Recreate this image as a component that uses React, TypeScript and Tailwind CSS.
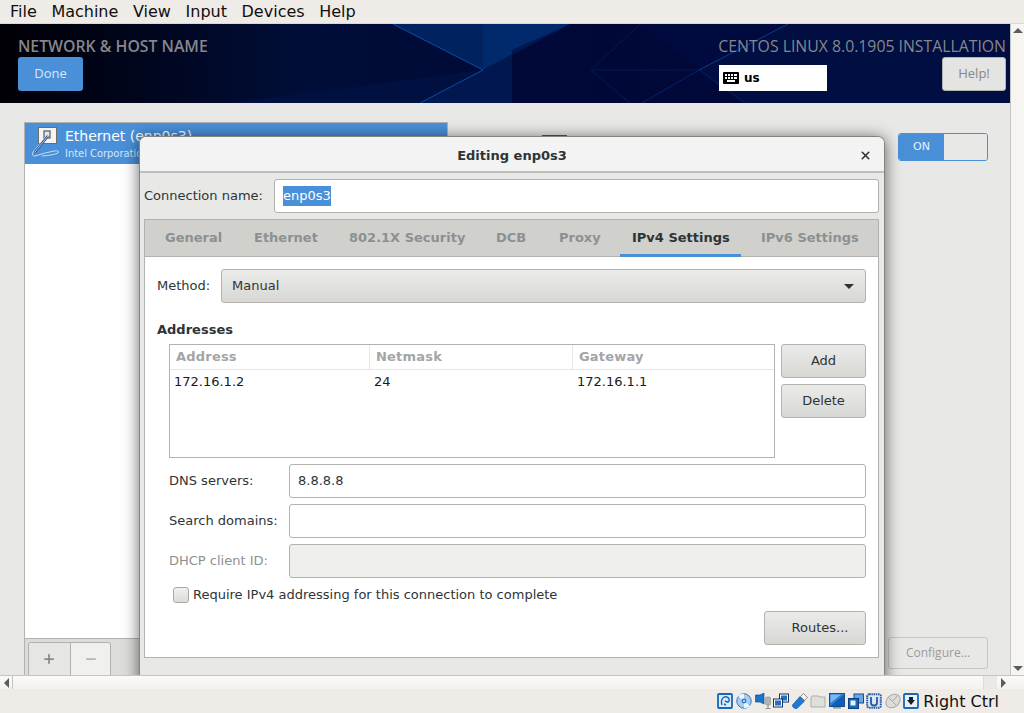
import { ReactNode } from "react";
import { Plus, Minus, X } from "lucide-react";

const deja = "font-['DejaVu_Sans',sans-serif]";
const over = "font-['Open_Sans','Liberation_Sans',sans-serif]";

const btn =
  "flex items-center rounded-[3px] border border-[#b2b2ae] bg-gradient-to-b from-[#ebebe9] to-[#d7d7d4] text-[13px] text-[#2e3436]";

function Field({ label, value, disabled }: { label: string; value?: string; disabled?: boolean }) {
  return (
    <div className="flex items-center">
      <div className={`w-[144px] pl-[24px] text-[13px] whitespace-nowrap ${disabled ? "text-[#8d9091]" : "text-[#2e3436]"}`}>
        {label}
      </div>
      <div
        className={`flex h-[34px] w-[577px] items-center rounded-[3px] border border-[#b2b2ae] px-[8px] text-[13px] text-[#2e3436] ${
          disabled ? "bg-[#efefee]" : "bg-white"
        }`}
      >
        {value}
      </div>
    </div>
  );
}

function KeyboardIcon() {
  return (
    <svg width="16" height="12" viewBox="0 0 16 12">
      <rect width="16" height="12" rx="1" fill="#000" />
      <g fill="#fff">
        <rect x="2" y="2" width="2" height="2" />
        <rect x="5" y="2" width="2" height="2" />
        <rect x="8" y="2" width="2" height="2" />
        <rect x="11" y="2" width="3" height="2" />
        <rect x="2" y="5" width="2" height="2" />
        <rect x="5" y="5" width="2" height="2" />
        <rect x="8" y="5" width="2" height="2" />
        <rect x="11" y="5" width="3" height="2" />
        <rect x="4" y="8" width="8" height="2" />
      </g>
    </svg>
  );
}

function EthernetIcon() {
  return (
    <svg width="34" height="36" viewBox="0 0 34 36" className="shrink-0">
      <rect x="8.5" y="1.5" width="18" height="16" fill="#f4f4f2" stroke="#6d6d6a" />
      <rect x="14" y="5" width="6" height="7" fill="#e6e6e4" stroke="#55595c" strokeWidth="1.2" />
      <path d="M17 9 L3 26 Q1 30 5 30 Q14 27 24 25 Q30 24 28 27 Q24 29 12 30" fill="none" stroke="#c9daf0" strokeWidth="1" />
      <path d="M18 10 L5 26" fill="none" stroke="#27528f" strokeWidth="2.4" />
      <path d="M18 10 L5 26" fill="none" stroke="#a9c6ec" strokeWidth="1" />
    </svg>
  );
}

function HeaderArt() {
  return (
    <svg className="absolute inset-0" width="1010" height="79" viewBox="0 0 1010 79">
      <defs>
        <linearGradient id="hdr" x1="0" x2="1" y1="0" y2="0">
          <stop offset="0" stopColor="#000006" />
          <stop offset="0.15" stopColor="#00061f" />
          <stop offset="0.3" stopColor="#000e38" />
          <stop offset="0.6" stopColor="#000838" />
          <stop offset="1" stopColor="#000b3c" />
        </linearGradient>
      </defs>
      <rect width="1010" height="79" fill="url(#hdr)" />
      <polygon points="230,79 483,46 420,79" fill="#001040" />
      <polygon points="393,0 483,46 483,0" fill="#00235f" />
      <polygon points="483,0 570,0 483,46" fill="#002a6c" />
      <polygon points="483,46 570,0 512,26 512,79 420,79" fill="#00184f" />
      <polygon points="699,46 788,0 640,0" fill="#000a3e" />
      <polygon points="699,46 788,0 1010,0 1010,79 745,79" fill="#000e42" />
      <path d="M393 0 L483 46 L420 79" stroke="#0b4da6" strokeWidth="1" fill="none" />
      <path d="M699 46 L788 0" stroke="#0a3f8e" strokeWidth="1" fill="none" />
      <path d="M699 46 L642 79 M699 46 L745 79" stroke="#04246a" strokeWidth="1" fill="none" />
      <path d="M591 46 L640 0 M591 46 L699 46 M591 46 L630 79" stroke="#021a55" strokeWidth="1" fill="none" />
    </svg>
  );
}

function StatusIcon({ children }: { children: ReactNode }) {
  return (
    <svg width="16" height="16" viewBox="0 0 16 16" className="shrink-0">
      {children}
    </svg>
  );
}

function StatusIcons() {
  return (
    <div className="flex items-center gap-[2.6px]">
      <StatusIcon>
        <rect x="1" y="1" width="14" height="14" rx="1" fill="#dcebfa" stroke="#1467bd" strokeWidth="1.8" />
        <path d="M5 12 C3 6 7 3 10 4 C13 5 13 9 10 9 L8 8 M9 12 L7 11" fill="none" stroke="#1467bd" strokeWidth="1.4" />
      </StatusIcon>
      <StatusIcon>
        <circle cx="8" cy="8" r="7.2" fill="#a9cdf0" stroke="#2f79c6" />
        <path d="M8 8 L2 3 A7 7 0 0 1 8 1 Z" fill="#eef5fc" />
        <path d="M8 8 L14 13 A7 7 0 0 1 8 15 Z" fill="#eef5fc" />
        <circle cx="8" cy="8" r="2.4" fill="#2f79c6" />
        <circle cx="8" cy="8" r="0.9" fill="#fff" />
      </StatusIcon>
      <StatusIcon>
        <path d="M0.5 2 L5 2 L9 0 L9 11 L5 9 L0.5 9 Z" fill="#1d74c7" stroke="#0f4e92" strokeWidth="0.7" />
        <rect x="10.5" y="4" width="5" height="8" rx="1.2" fill="#b3b3b0" stroke="#8e8e8b" strokeWidth="0.6" />
        <path d="M13 12 L13 15 M10.5 15.5 L15.5 15.5" stroke="#8e8e8b" fill="none" />
      </StatusIcon>
      <StatusIcon>
        <rect x="6.5" y="1" width="9" height="8" fill="#fff" stroke="#14335c" />
        <rect x="8" y="2.5" width="6" height="5" fill="#1f6fc4" />
        <rect x="0.5" y="6" width="9" height="8" fill="#fff" stroke="#14335c" />
        <rect x="2" y="7.5" width="6" height="5" fill="#1f6fc4" />
      </StatusIcon>
      <StatusIcon>
        <path d="M0.5 12 L8 3.5 L12.5 8 L5 15.5 Q0.5 15.5 0.5 12 Z" fill="#1f7ad6" stroke="#10508f" strokeWidth="0.7" />
        <path d="M8.5 3.5 L11.5 0.5 L15.5 4.5 L12.5 7.5 Z" fill="#f4f4f2" stroke="#666" strokeWidth="0.7" />
      </StatusIcon>
      <StatusIcon>
        <path d="M1 5 L2 3 L9 3 L10 4 L15 4 L15 14 L1 14 Z" fill="#dededb" stroke="#adadaa" />
      </StatusIcon>
      <StatusIcon>
        <rect x="0.5" y="0.5" width="15" height="13" fill="#2a82d6" stroke="#12508f" />
        <path d="M1.5 13 L15 1.5 L15 13 Z" fill="#0f5eb4" />
        <path d="M1.5 1.5 L12 1.5 L1.5 10 Z" fill="#7cb8ee" />
        <rect x="4" y="14" width="8" height="1.6" fill="#9a9a97" />
      </StatusIcon>
      <StatusIcon>
        <rect x="6" y="1" width="9.5" height="9" fill="#6ba6e2" stroke="#1a4f8f" />
        <rect x="0.5" y="5.5" width="10" height="10" fill="#1467bd" stroke="#0d3c78" />
        <rect x="2.5" y="7.5" width="5" height="5" fill="#e6f0fa" />
      </StatusIcon>
      <StatusIcon>
        <rect x="1.2" y="1.2" width="13.6" height="13.6" rx="2" fill="#dbe8f6" stroke="#2358a6" strokeWidth="2" strokeDasharray="1.5 0.7" />
        <path d="M5 4 L5 10 Q5 12.5 8 12.5 Q11 12.5 11 10 L11 4" fill="none" stroke="#2358a6" strokeWidth="1.8" />
      </StatusIcon>
      <StatusIcon>
        <ellipse cx="8" cy="8" rx="7.8" ry="6" transform="rotate(-40 8 8)" fill="#dcdcd9" stroke="#a9a9a6" />
        <path d="M4 5 L11 12 M8 8 L12 3" stroke="#a9a9a6" fill="none" />
      </StatusIcon>
      <StatusIcon>
        <rect x="1" y="1" width="14" height="14" rx="1" fill="#e8f1fa" stroke="#1467bd" strokeWidth="1.8" />
        <path d="M6 4 L10 4 L10 7 L12 7 L8 12 L4 7 L6 7 Z" fill="#18212b" />
      </StatusIcon>
    </div>
  );
}

const tabs = [
  { label: "General", width: "w-[89px]" },
  { label: "Ethernet", width: "w-[95px]" },
  { label: "802.1X Security", width: "w-[147px]" },
  { label: "DCB", width: "w-[63px]" },
  { label: "Proxy", width: "w-[73px]" },
  { label: "IPv4 Settings", width: "w-[121px] mr-[8px]" },
  { label: "IPv6 Settings", width: "w-[121px]" },
];

function Dialog() {
  return (
    <div
      className={`absolute top-[33px] left-[139px] h-[539px] w-[746px] overflow-hidden rounded-t-[7px] border border-b-0 border-[#85857f] bg-[#e8e8e7] ${deja}`}
    >
      <div className="relative flex h-[36px] items-center justify-center border-b-2 border-[#bdbdba] bg-[#f3f3f3] pt-[3px] text-[13px] font-bold text-[#2e3436]">
        Editing enp0s3
        <X size={13} strokeWidth={3} className="absolute top-[12px] right-[12px] text-[#2e3436]" />
      </div>
      <div className="flex h-[46px] items-center pl-[4px]">
        <span className="w-[130px] text-[13px] text-[#2e3436]">Connection name:</span>
        <div className="flex h-[34px] w-[605px] items-center rounded-[3px] border border-[#b2b2ae] bg-white pl-[8px] text-[13px]">
          <span className="bg-[#4a90d9] text-white">enp0s3</span>
        </div>
      </div>
      <div className="mx-[4px] h-[439px] w-[735px] border border-[#b2b2ae] bg-white">
        <div className="flex h-[37px] items-center border-b border-[#b2b2ae] bg-[#d0d0cd] pl-[8px] text-[13px] font-bold whitespace-nowrap">
          {tabs.map((t) => (
            <div
              key={t.label}
              className={`flex h-[37px] shrink-0 items-center pl-[12px] ${t.width} ${
                t.label === "IPv4 Settings" ? "border-b-[3px] border-[#4a90d9] pt-[3px] text-[#2e3436]" : "text-[#8d9091]"
              }`}
            >
              {t.label}
            </div>
          ))}
        </div>
        <div className="flex h-[65px] items-start pt-[12px] pl-[12px]">
          <span className="flex h-[34px] w-[64px] items-center text-[13px] text-[#2e3436]">Method:</span>
          <div className={`${btn} h-[34px] w-[645px] justify-between pr-[11px] pl-[10px]`}>
            <span>Manual</span>
            <div className="h-0 w-0 border-x-[5px] border-t-[5px] border-x-transparent border-t-[#2e3436]" />
          </div>
        </div>
        <div className="pl-[12px] text-[13px] leading-[16px] font-bold text-[#2e3436]">Addresses</div>
        <div className="mt-[6px] flex items-start pl-[24px]">
          <div className="h-[114px] w-[606px] border border-[#b2b2ae] bg-white">
            <div className="flex h-[25px] border-b border-[#e6e6e4] text-[13px] font-bold tracking-[0.2px] text-[#a3a5a6]">
              <div className="flex w-[200px] items-center border-r border-[#e6e6e4] pl-[6px]">Address</div>
              <div className="flex w-[203px] items-center border-r border-[#e6e6e4] pl-[6px]">Netmask</div>
              <div className="flex items-center pl-[6px]">Gateway</div>
            </div>
            <div className="flex h-[23px] items-center text-[13px] text-[#1a1a1a]">
              <div className="w-[200px] pl-[4px]">172.16.1.2</div>
              <div className="w-[203px] pl-[4px]">24</div>
              <div className="pl-[4px]">172.16.1.1</div>
            </div>
          </div>
          <div className="ml-[6px] flex flex-col gap-[6px]">
            <div className={`${btn} h-[34px] w-[85px] justify-center`}>Add</div>
            <div className={`${btn} h-[34px] w-[85px] justify-center`}>Delete</div>
          </div>
        </div>
        <div className="mt-[6px] flex flex-col gap-[6px]">
          <Field label="DNS servers:" value="8.8.8.8" />
          <Field label="Search domains:" />
          <Field label="DHCP client ID:" disabled />
        </div>
        <div className="mt-[7px] flex items-center pl-[28px] text-[13px] text-[#2e3436]">
          <div className="mr-[4px] h-[16px] w-[16px] rounded-[3px] border border-[#a9a9a6] bg-gradient-to-b from-[#f0f0ee] to-[#dcdcda]" />
          Require IPv4 addressing for this connection to complete
        </div>
        <div className="mt-[6px] flex justify-end pr-[12px]">
          <div className={`${btn} h-[34px] w-[102px] justify-center pl-[10px]`}>Routes...</div>
        </div>
      </div>
    </div>
  );
}

export default function App() {
  return (
    <div className={`flex h-[713px] w-[1024px] flex-col overflow-hidden bg-[#efebe7] ${deja}`}>
      {/* VirtualBox menu */}
      <div className="flex h-6 shrink-0 items-center gap-[14.6px] border-b border-[#dcd9d4] pl-[10px] text-[16px] text-[#101010]">
        {["File", "Machine", "View", "Input", "Devices", "Help"].map((m) => (
          <span key={m}>{m}</span>
        ))}
      </div>

      <div className="flex h-[651px] shrink-0">
        <div className="flex w-[1010px] flex-col">
          {/* Anaconda header */}
          <div className="relative h-[79px] shrink-0">
            <HeaderArt />
            <div className="relative flex h-full justify-between pt-[12px] pr-[4px] pl-[18px]">
              <div>
                <div className={`text-[15.8px] leading-[20px] font-semibold text-[#85878a] ${over}`}>NETWORK &amp; HOST NAME</div>
                <div className={`mt-[1px] flex h-[34px] w-[65px] items-center justify-center rounded-[3px] bg-[#4a90d9] text-[13px] text-[#d8e6f5] ${over}`}>
                  Done
                </div>
              </div>
              <div className="flex flex-col items-end">
                <div className={`text-[15.8px] leading-[20px] text-[#85878a] ${over}`}>CENTOS LINUX 8.0.1905 INSTALLATION</div>
                <div className="mt-[1px] flex w-[287px] items-start justify-between">
                  <div className="mt-[8px] flex h-[26px] w-[108px] items-center gap-[5px] bg-white pl-[4px] text-[12px] font-bold text-black">
                    <KeyboardIcon />
                    us
                  </div>
                  <div className={`flex h-[34px] w-[64px] items-center justify-center rounded-[3px] border border-[#b2b2ae] bg-[#e4e4e2] text-[13px] text-[#85878a] ${over}`}>
                    Help!
                  </div>
                </div>
              </div>
            </div>
          </div>

          {/* Network spoke */}
          <div className="relative flex flex-1 justify-between overflow-hidden bg-[#e8e8e7] pt-[19px] pl-[24px]">
            <div className="flex w-[424px] flex-col border-x border-t border-[#b2b2ae] bg-white">
              <div className="flex h-[41px] items-center gap-[1px] bg-[#4a90d9] pl-[5px] text-white">
                <EthernetIcon />
                <div>
                  <div className="text-[14px] leading-[19px]">Ethernet (enp0s3)</div>
                  <div className="font-['DejaVu_Sans_Condensed','Liberation_Sans',sans-serif] text-[11px] leading-[15px] text-[#d8e6f5]">Intel Corporation</div>
                </div>
              </div>
              <div className="flex-1" />
              <div className="flex h-[37px] items-end border-t border-[#b2b2ae] bg-[#dcdcda] pl-[3px]">
                <div className="flex h-[33px] w-[83px] overflow-hidden rounded-t-[3px] border-x border-t border-[#b2b2ae]">
                  <div className="flex w-[42px] items-center justify-center border-r border-[#b2b2ae] bg-[#e6e6e4] pr-[1px]">
                    <Plus size={14} strokeWidth={3} className="text-[#888a85]" />
                  </div>
                  <div className="flex flex-1 items-center justify-center bg-[#f0f0ef]">
                    <Minus size={14} strokeWidth={3} className="text-[#b5b5b2]" />
                  </div>
                </div>
              </div>
            </div>

            <div className="flex w-[112px] flex-col items-end justify-between pt-[11px] pr-[22px] pb-[6px]">
              <div className="flex h-[28px] w-[90px] overflow-hidden rounded-[3px] border border-[#4a90d9]">
                <div className="flex w-[45px] items-center justify-center bg-[#4a90d9] text-[11px] text-[#e8f0fa]">ON</div>
                <div className="flex-1 rounded-l-[2px] bg-[#e8e8e7]" />
              </div>
              <div className={`flex h-[32px] w-[100px] items-center justify-center rounded-[3px] border border-[#c6c6c3] text-[12px] text-[#9a9c9d] ${over}`}>
                Configure...
              </div>
            </div>

            <div className="absolute top-[32px] left-[542px] h-[2px] w-[25px] bg-[#55575a]" />
            <div className="absolute top-[33px] left-[139px] h-[560px] w-[746px] rounded-t-[7px] shadow-[0_2px_16px_rgba(0,0,0,0.6)]" />
            <Dialog />
          </div>
        </div>

        {/* vertical scrollbar */}
        <div className="flex w-[14px] flex-col items-center justify-between border-l border-[#c4c4c1] bg-[#f7f5f2] py-[4px]">
          <div className="h-0 w-0 border-x-[5px] border-b-[5px] border-x-transparent border-b-[#5c5c5c]" />
          <div className="h-0 w-0 border-x-[5px] border-t-[5px] border-x-transparent border-t-[#5c5c5c]" />
        </div>
      </div>

      {/* horizontal scrollbar */}
      <div className="flex h-[14px] shrink-0 items-center border-t border-[#c4c4c1] bg-gradient-to-b from-[#fbfaf8] to-[#f4f1ed]">
        <div className="flex h-full w-[13px] items-center justify-center border-r border-[#c4c4c1]">
          <div className="h-0 w-0 border-y-[5px] border-r-[5px] border-y-transparent border-r-[#5c5c5c]" />
        </div>
        <div className="flex-1" />
        <div className="h-full w-[14px] border-l border-[#dcdcd9] bg-[#ebe9e5]" />
        <div className="flex h-full w-[13px] items-center justify-center">
          <div className="h-0 w-0 border-y-[5px] border-l-[5px] border-y-transparent border-l-[#5c5c5c]" />
        </div>
        <div className="w-[14px]" />
      </div>

      {/* status bar */}
      <div className="flex h-6 shrink-0 items-center justify-end pr-[25px]">
        <StatusIcons />
        <span className="ml-[4px] pt-[1px] text-[16px] text-[#101010]">Right Ctrl</span>
      </div>
    </div>
  );
}
